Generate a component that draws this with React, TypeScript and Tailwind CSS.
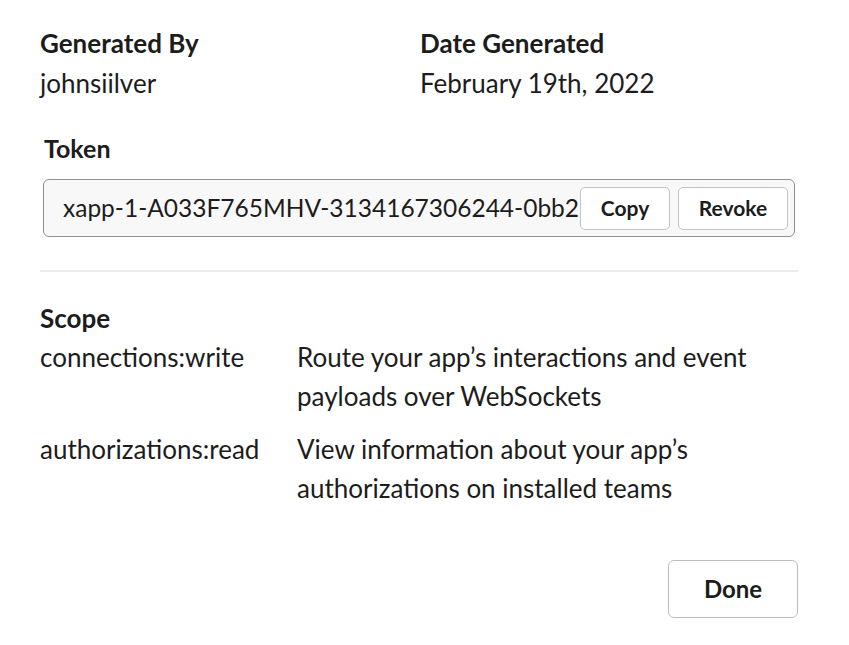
import React from 'react';

const scopes = [
  { name: 'connections:write', desc: 'Route your app’s interactions and event payloads over WebSockets' },
  { name: 'authorizations:read', desc: 'View information about your app’s authorizations on installed teams' },
];

export default function App() {
  return (
    <div
      className="w-[849px] h-[645px] bg-white text-[#1d1c1d] text-[26px] leading-[40px] pl-[40px] pr-[51px] pt-[23px]"
      style={{ fontFamily: 'Lato, "Noto Sans", sans-serif' }}
    >
      <div className="grid grid-cols-[380px_1fr]">
        <div>
          <div className="font-bold">Generated By</div>
          <div>johnsiilver</div>
        </div>
        <div>
          <div className="font-bold">Date Generated</div>
          <div>February 19th, 2022</div>
        </div>
      </div>

      <div className="mx-[3px] mt-[25px]">
        <div className="font-bold ml-[1px] text-[25px]">Token</div>
        <div className="mt-[11px] h-[58px] flex items-center rounded-[6px] border border-[#8f8f8f] bg-[#f8f8f8] pl-[19px] pr-[6px]">
          <span className="flex-1 min-w-0 overflow-hidden whitespace-nowrap text-[24.5px]">
            xapp-1-A033F765MHV-3134167306244-0bb2
          </span>
          <button className="h-[43px] w-[90px] shrink-0 rounded-[5px] border border-[#c4c4c4] bg-white text-[21px] font-bold">
            Copy
          </button>
          <button className="ml-[8px] h-[43px] w-[110px] shrink-0 rounded-[5px] border border-[#c4c4c4] bg-white text-[21px] font-bold">
            Revoke
          </button>
        </div>
      </div>

      <div className="mt-[33px] h-[2px] bg-[#ebebeb]" />

      <div className="mt-[26px]">
        <div className="font-bold">Scope</div>
        <div className="flex flex-col gap-[14px]">
          {scopes.map((s) => (
            <div key={s.name} className="grid grid-cols-[257px_1fr] leading-[39px]">
              <div>{s.name}</div>
              <div className="max-w-[480px]">{s.desc}</div>
            </div>
          ))}
        </div>
      </div>

      <div className="mt-[52px] flex justify-end">
        <button className="h-[58px] w-[130px] rounded-[6px] border border-[#bdbdbd] bg-white text-[24px] font-bold">
          Done
        </button>
      </div>
    </div>
  );
}
